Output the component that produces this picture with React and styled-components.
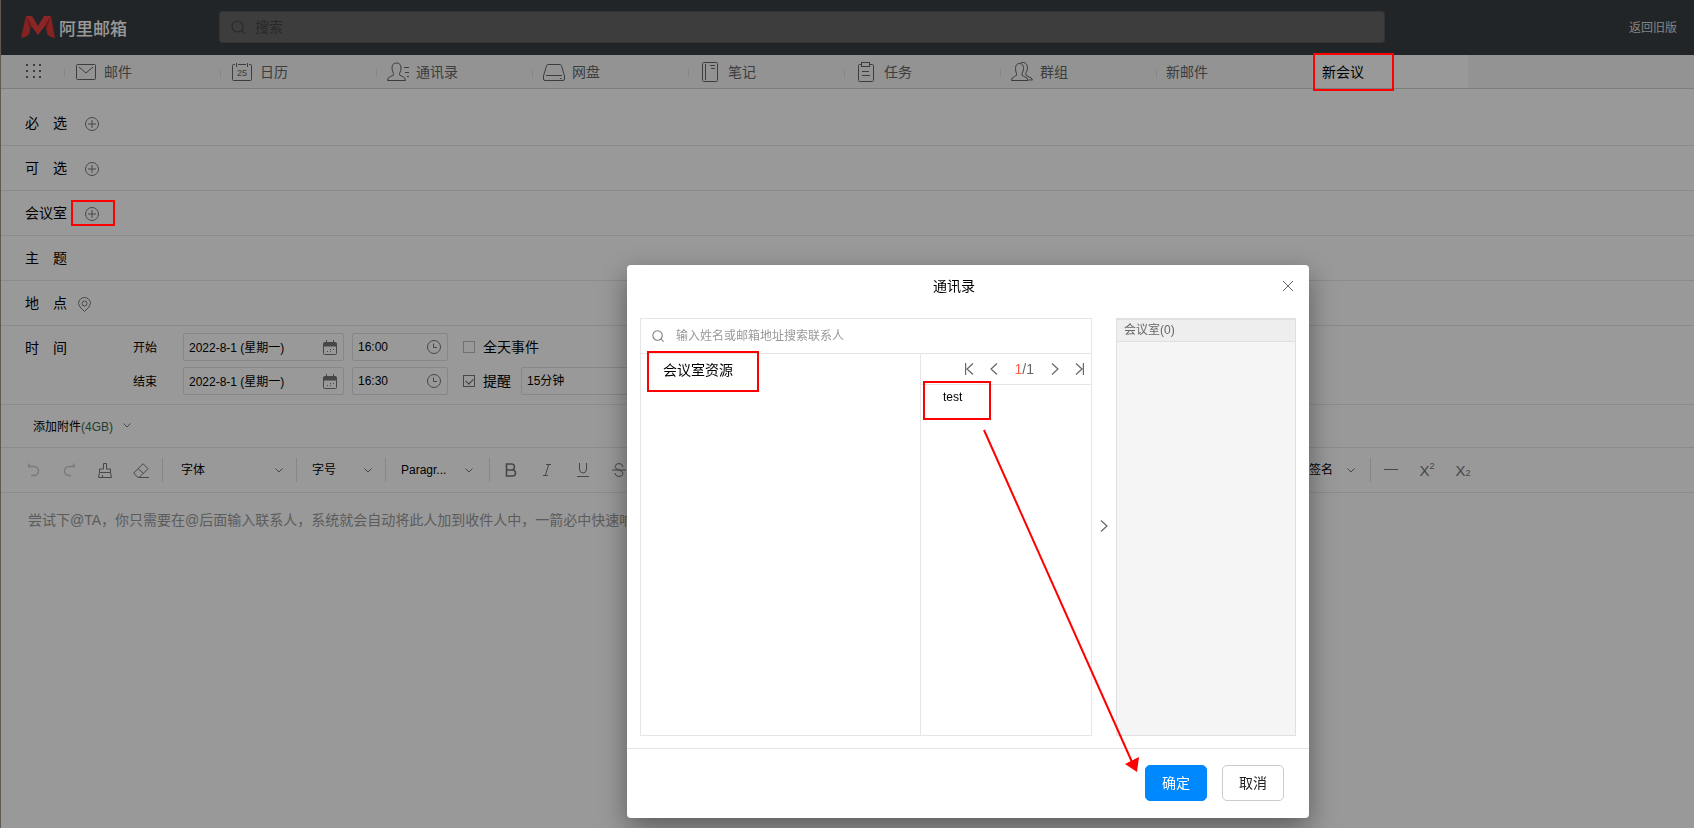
import React, { useState } from 'react';
import styled, { createGlobalStyle } from 'styled-components';

const GlobalStyle = createGlobalStyle`
  * {
    box-sizing: border-box;
  }
  body {
    margin: 0;
    font-family: "Liberation Sans", "Noto Sans CJK SC", sans-serif;
    font-size: 14px;
    color: #000;
  }
  button, input, select, textarea {
    font-family: inherit;
    font-size: inherit;
    color: inherit;
  }
  button {
    padding: 0;
    border: none;
    background: none;
    cursor: pointer;
  }
  svg {
    display: block;
    flex: none;
  }
`;

function Icon({ w, h, sw = 1, children }) {
  return (
    <svg width={w} height={h} viewBox={`0 0 ${w} ${h}`} fill="none" stroke="currentColor" strokeWidth={sw} aria-hidden="true">
      {children}
    </svg>
  );
}

const Logo = () => (
  <svg width="34" height="22" viewBox="0 0 34 22" aria-hidden="true">
    <path d="M5 0h6l6 10 6-10h7l-3 6-10 13L8 7z" fill="#e84040" />
    <path d="M5 0 0 22q7-1 8.500-5L10 8z" fill="#de3a3a" />
    <path d="M30 0l4 22q-7-1-8-5L24.500 8z" fill="#de3a3a" />
    <path d="M5 0l5 8-1.200 5zM30 0l-5.500 8 1 5z" fill="#b52a2e" />
  </svg>
);

const SearchIcon = ({ size = 14 }) => (
  <svg width={size} height={size} viewBox="0 0 14 14" fill="none" stroke="currentColor" strokeWidth="1.200" aria-hidden="true">
    <circle cx="6.500" cy="6.500" r="5.500" />
    <path d="M10.500 10.500l3 3" />
  </svg>
);

const MailIcon = () => (
  <Icon w={22} h={22}>
    <rect x="1.500" y="3.500" width="19" height="15" rx="1" />
    <path d="M4 6l7 6 7-6" />
  </Icon>
);

const CalendarTabIcon = () => (
  <Icon w={22} h={22}>
    <path d="M4 3.500H2.500a1 1 0 0 0-1 1v14a1 1 0 0 0 1 1h17a1 1 0 0 0 1-1v-14a1 1 0 0 0-1-1H18M7 3.500h8M5.500 2v4M16.500 2v4" />
    <text x="11" y="15" fontSize="9" textAnchor="middle" fill="currentColor" stroke="none">25</text>
  </Icon>
);

const ContactIcon = () => (
  <Icon w={22} h={22}>
    <path d="M.500 19.500q0-3 3-4 4-1 3-3Q5 10 5 7q0-5 4.500-5T14 7q0 3-1.500 5.500-1 2 3 3 3 1 3 4z" />
    <path d="M17 6.500h5M18 11.500h4M20 15.500h2" />
  </Icon>
);

const DriveIcon = () => (
  <Icon w={22} h={22}>
    <path d="M5 3.500h12q1 0 1.400 1L21.500 15v3q0 1.500-1.500 1.500H2Q.500 19.500.500 18v-3L3.600 4.500Q4 3.500 5 3.500zM3 14.500h16" />
    <path d="M17 17.500h1.500" />
  </Icon>
);

const NoteIcon = () => (
  <Icon w={22} h={22}>
    <rect x="3.500" y="1.500" width="15" height="19" rx="1" />
    <path d="M6.500 3v16M11 4.500h5M12 7.500h4" />
  </Icon>
);

const TaskIcon = () => (
  <Icon w={22} h={22}>
    <path d="M7 3.500H4.500a1 1 0 0 0-1 1v15a1 1 0 0 0 1 1h13a1 1 0 0 0 1-1v-15a1 1 0 0 0-1-1H15" />
    <rect x="6.500" y="1.500" width="8" height="4" />
    <path d="M7 10.500h7M7 14.500h8" />
  </Icon>
);

const GroupIcon = () => (
  <Icon w={22} h={22}>
    <path d="M.500 19.500q0-3 3-4 3-1 2-3Q4.500 10 4.500 7.500q0-5 4-5t4 5q0 2.500-1.500 5-1 2 2 3 4 1 4 4z" />
    <path d="M9 2.500Q10 1 12.500 1.500q4 .5 4 6 0 2-1.500 4-1.500 3 2 4 4 1 4.500 3.500h-4" />
  </Icon>
);

const PlusIcon = () => (
  <Icon w={14} h={14}>
    <circle cx="7" cy="7" r="6.500" />
    <path d="M3 7h8M7 3v8" />
  </Icon>
);

const PinIcon = () => (
  <Icon w={13} h={15}>
    <path d="M6.500 14.500Q.500 9.500.500 6.500a6 6 0 0 1 12 0q0 3-6 8z" />
    <circle cx="6.500" cy="6.500" r="2.500" />
  </Icon>
);

const CalendarIcon = () => (
  <Icon w={14} h={15}>
    <rect x=".5" y="2.500" width="13" height="12" rx="1" />
    <path d="M1 3h12v3H1z" fill="currentColor" />
    <path d="M3.500 0v3M10.500 0v3" />
    <path d="M7 9.500h1M10 9.500h1M4 11.500h1M7 11.500h1" />
  </Icon>
);

const ClockIcon = () => (
  <Icon w={14} h={14}>
    <circle cx="7" cy="7" r="6.500" />
    <path d="M6.500 3.500v4H10" />
  </Icon>
);

const ChevronDown = () => (
  <Icon w={8} h={5}>
    <path d="M.500.500L4 4 7.500.500" />
  </Icon>
);

const UndoIcon = () => (
  <Icon w={13} h={14} sw={1.500}>
    <path d="M1 3.500h6a4.500 4.500 0 0 1 0 9H4M2 .500v4" />
  </Icon>
);

const RedoIcon = () => (
  <Icon w={13} h={14} sw={1.500}>
    <path d="M12 3.500H6a4.500 4.500 0 0 0 0 9h2M11 .500v4" />
  </Icon>
);

const BrushIcon = () => (
  <Icon w={14} h={15}>
    <path d="M5.500 6V.500h3V6h4v3.500h-11V6zM1.500 9.500L.500 14.500h13l-1-5M4.500 14v-2" />
  </Icon>
);

const EraserIcon = () => (
  <Icon w={16} h={15}>
    <path d="M10 .700l5 5-8.500 8.500H4.500L.700 10zM5 5.500l5.500 5M6 14.500h10" />
  </Icon>
);

const Page = styled.div`
  position: relative;
  display: flex;
  flex-direction: column;
  min-height: 100vh;
  border-left: 1px solid #a09688;
  background: #fff;
`;

const Header = styled.header`
  display: flex;
  align-items: center;
  height: 55px;
  padding-bottom: 1px;
  background: #393e42;
`;

const Brand = styled.a`
  display: flex;
  align-items: center;
  gap: 4px;
  width: 218px;
  padding-left: 20px;
  color: #fff;
  font-size: 17px;
  font-weight: 500;
  text-decoration: none;
`;

const SearchBar = styled.label`
  display: flex;
  flex: 1;
  align-items: center;
  gap: 10px;
  height: 32px;
  padding: 0 11px;
  border: 1px solid #555;
  border-radius: 3px;
  background: #666;
  color: #444;
`;

const BareInput = styled.input`
  flex: 1;
  min-width: 0;
  height: 24px;
  padding: 0 0 1px;
  border: none;
  outline: none;
  background: transparent;

  &::placeholder {
    color: ${(props) => props.$hint || '#999'};
    opacity: 1;
  }
`;

const HeaderSide = styled.div`
  display: flex;
  justify-content: flex-end;
  width: 309px;
  padding-right: 17px;
`;

const OldLink = styled.a`
  padding-bottom: 2px;
  color: #ddd;
  font-size: 12px;
  text-decoration: none;
`;

const TabBar = styled.nav`
  display: flex;
  height: 34px;
  border-bottom: 1px solid #d0d0d0;
  background: #f5f5f5;
`;

const AppsButton = styled.button`
  display: flex;
  align-items: flex-start;
  width: 63px;
  padding: 9px 0 0 25px;
  color: #666;
`;

const Tab = styled.a`
  display: flex;
  align-items: center;
  gap: 7px;
  width: 156px;
  padding: 0 0 2px ${(props) => (props.$plain ? '10px' : '11px')};
  background: ${(props) => (props.$active
    ? '#fff'
    : 'linear-gradient(#ddd, #ddd) 0 14px / 1px 8px no-repeat')};
  color: ${(props) => (props.$active ? '#000' : '#666')};
  text-decoration: none;

  svg {
    margin-top: 3px;
  }
`;

const Form = styled.form`
  padding-top: 12px;
`;

const Row = styled.div`
  display: flex;
  align-items: center;
  height: 45px;
  padding: 2px 0 0 24px;
  border-bottom: 1px solid #e6e6e6;
`;

const RowLabel = styled.label`
  width: 42px;
  padding-bottom: 4px;
`;

const RowButton = styled.button`
  margin: 0 18px;
  color: #777;
`;

const PinButton = styled.button`
  margin: 0 11px;
  color: #777;
`;

const TimeRow = styled.div`
  display: flex;
  padding: 7px 0 9px 24px;
  border-bottom: 1px solid #e6e6e6;
`;

const TimeLabel = styled.span`
  width: 108px;
  padding-top: 4px;
`;

const TimeLines = styled.div`
  display: flex;
  flex-direction: column;
  gap: 6px;
`;

const TimeLine = styled.div`
  display: flex;
  align-items: center;
  height: 28px;
  font-size: 12px;
`;

const LineLabel = styled.label`
  width: 50px;
  padding-bottom: 2px;
`;

const Field = styled.div`
  display: flex;
  align-items: center;
  width: ${(props) => props.$width};
  height: 28px;
  margin-right: 8px;
  padding: 0 6px 0 5px;
  border: 1px solid #e2e2e2;
  border-radius: 2px;
  color: #000;

  svg {
    color: #777;
  }
`;

const CheckLabel = styled.label`
  display: flex;
  align-items: center;
  gap: 8px;
  margin: 0 10px 0 7px;
  font-size: 14px;
`;

const CheckText = styled.span`
  padding-bottom: 2px;
`;

const CheckBox = styled.input`
  appearance: none;
  position: relative;
  width: 12px;
  height: 12px;
  margin: 0;
  border: 1px solid #bbb;

  &:checked {
    border-color: #777;
  }

  &:checked::after {
    content: '';
    position: absolute;
    top: 1px;
    left: 3px;
    width: 4px;
    height: 6px;
    border: solid #666;
    border-width: 0 1px 1px 0;
    transform: rotate(45deg);
  }
`;

const SelectBox = styled.select`
  appearance: none;
  flex: 1;
  min-width: 0;
  padding: 0;
  border: none;
  outline: none;
  background: transparent;
`;

const AttachRow = styled.div`
  display: flex;
  align-items: center;
  height: 43px;
  padding-left: 32px;
  border-bottom: 1px solid #e6e6e6;
`;

const AttachButton = styled.button`
  display: flex;
  align-items: center;
  gap: 10px;
  padding-bottom: 2px;
  font-size: 12px;

  svg {
    color: #777;
  }
`;

const Size = styled.span`
  color: #346a50;
`;

const Toolbar = styled.div`
  display: flex;
  align-items: center;
  justify-content: space-between;
  height: 45px;
  padding: 0 213px 0 14px;
  border-bottom: 1px solid #e6e6e6;
`;

const ToolGroup = styled.div`
  display: flex;
  align-items: center;
`;

const Tool = styled.button`
  display: flex;
  align-items: center;
  justify-content: center;
  width: 36px;
  height: 24px;
  color: #777;

  &:disabled {
    color: #ccc;
  }
  sup, sub {
    font-size: 9px;
    line-height: 1;
  }
  sup {
    margin-bottom: 8px;
  }
  sub {
    margin-top: 6px;
  }
`;

const Letter = styled.span`
  font-size: 15px;
`;

const Divider = styled.span`
  width: 1px;
  height: 24px;
  margin: 0 ${(props) => props.$side || '0px'};
  background: #e0e0e0;
`;

const ToolSelect = styled.label`
  display: flex;
  align-items: center;
  width: ${(props) => props.$width};
  padding: 0 13px 0 15px;
  font-size: 12px;

  svg {
    color: #777;
  }
`;

const Editor = styled.textarea`
  flex: 1;
  padding: 17px 27px;
  border: none;
  outline: none;
  resize: none;
  background: transparent;
  line-height: 20px;

  &::placeholder {
    color: #999;
    opacity: 1;
  }
`;

const Mask = styled.div`
  position: fixed;
  inset: 0;
  background: rgba(0, 0, 0, 0.4);
`;

const Dialog = styled.section`
  position: fixed;
  right: 385px;
  bottom: 10px;
  display: flex;
  flex-direction: column;
  width: 682px;
  border-radius: 4px;
  background: #fff;
  box-shadow: 0 10px 28px rgba(0, 0, 0, 0.4);
`;

const DialogHead = styled.div`
  display: flex;
  align-items: center;
  height: 42px;
  padding-right: 14px;
`;

const DialogTitle = styled.h2`
  flex: 1;
  margin: 0;
  padding-bottom: 2px;
  font-size: 14px;
  font-weight: 400;
  text-align: center;
`;

const CloseButton = styled.button`
  display: flex;
  justify-content: center;
  width: 14px;
  color: #666;
`;

const DialogBody = styled.div`
  display: flex;
  height: 441px;
  padding: 11px 13px 12px;
`;

const Finder = styled.div`
  display: flex;
  flex: 1;
  flex-direction: column;
  border: 1px solid #e6e6e6;
`;

const FinderSearch = styled.label`
  display: flex;
  align-items: center;
  gap: 12px;
  height: 35px;
  padding: 0 11px;
  border-bottom: 1px solid #e6e6e6;
  color: #777;
  font-size: 12px;
`;

const FinderColumns = styled.div`
  display: flex;
  flex: 1;
`;

const Tree = styled.div`
  flex: 1;
  padding: 5px 22px;
  border-right: 1px solid #e6e6e6;
`;

const Entry = styled.button`
  display: block;
  font-size: ${(props) => (props.$small ? '12px' : '14px')};
`;

const People = styled.div`
  width: 170px;
`;

const Pager = styled.div`
  display: flex;
  align-items: center;
  justify-content: flex-end;
  height: 31px;
  padding-right: 7px;
  border-bottom: 1px solid #e6e6e6;
  color: #666;

  button {
    display: flex;
    justify-content: center;
    width: 9px;
    color: #666;
  }
`;

const PageCount = styled.span`
  margin: 0 17px;

  b {
    color: #ff5b4a;
    font-weight: 400;
  }
`;

const PagerPair = styled.div`
  display: flex;
  gap: 15px;
`;

const PeopleList = styled.div`
  padding: 5px 22px;
`;

const MoveButton = styled.button`
  display: flex;
  align-items: center;
  justify-content: center;
  width: 24px;
  padding-bottom: 2px;
  color: #666;
`;

const Picked = styled.div`
  width: 180px;
  border: 1px solid #e0e0e0;
  border-top-width: 2px;
  background: #f5f5f5;
`;

const PickedTitle = styled.h3`
  height: 22px;
  margin: 0;
  padding-left: 7px;
  border-bottom: 1px solid #e0e0e0;
  background: #eee;
  color: #666;
  font-size: 12px;
  font-weight: 400;
  line-height: 21px;
`;

const DialogFoot = styled.div`
  display: flex;
  justify-content: flex-end;
  gap: 15px;
  padding: 16px 25px 17px;
  border-top: 1px solid #e6e6e6;
`;

const DialogButton = styled.button`
  width: 62px;
  height: 36px;
  padding-bottom: 2px;
  border: 1px solid ${(props) => (props.$primary ? '#0089ff' : '#ccc')};
  border-radius: 5px;
  background: ${(props) => (props.$primary ? '#0089ff' : '#fff')};
  color: ${(props) => (props.$primary ? '#fff' : '#222')};
`;

const Marks = styled.svg`
  position: absolute;
  top: 0;
  left: 0;
  pointer-events: none;
`;

const tabs = [
  { name: '邮件', icon: <MailIcon /> },
  { name: '日历', icon: <CalendarTabIcon /> },
  { name: '通讯录', icon: <ContactIcon /> },
  { name: '网盘', icon: <DriveIcon /> },
  { name: '笔记', icon: <NoteIcon /> },
  { name: '任务', icon: <TaskIcon /> },
  { name: '群组', icon: <GroupIcon /> },
  { name: '新邮件' },
  { name: '新会议', active: true },
];

const people = [
  { id: 'required', name: '必　选' },
  { id: 'optional', name: '可　选' },
  { id: 'room', name: '会议室' },
];

function MeetingForm() {
  const [allDay, setAllDay] = useState(false);
  const [remind, setRemind] = useState(true);

  return (
    <Form>
      {people.map(({ id, name }) => (
        <Row key={id}>
          <RowLabel htmlFor={id}>{name}</RowLabel>
          <RowButton type="button"><PlusIcon /></RowButton>
          <BareInput id={id} />
        </Row>
      ))}
      <Row>
        <RowLabel htmlFor="subject">主　题</RowLabel>
        <BareInput id="subject" />
      </Row>
      <Row>
        <RowLabel htmlFor="place">地　点</RowLabel>
        <PinButton type="button"><PinIcon /></PinButton>
        <BareInput id="place" />
      </Row>
      <TimeRow>
        <TimeLabel>时　间</TimeLabel>
        <TimeLines>
          <TimeLine>
            <LineLabel htmlFor="start">开始</LineLabel>
            <Field $width="161px">
              <BareInput id="start" defaultValue="2022-8-1 (星期一)" />
              <CalendarIcon />
            </Field>
            <Field $width="96px">
              <BareInput defaultValue="16:00" />
              <ClockIcon />
            </Field>
            <CheckLabel>
              <CheckBox type="checkbox" checked={allDay} onChange={() => setAllDay(!allDay)} />
              <CheckText>全天事件</CheckText>
            </CheckLabel>
          </TimeLine>
          <TimeLine>
            <LineLabel htmlFor="end">结束</LineLabel>
            <Field $width="161px">
              <BareInput id="end" defaultValue="2022-8-1 (星期一)" />
              <CalendarIcon />
            </Field>
            <Field $width="96px">
              <BareInput defaultValue="16:30" />
              <ClockIcon />
            </Field>
            <CheckLabel>
              <CheckBox type="checkbox" checked={remind} onChange={() => setRemind(!remind)} />
              <CheckText>提醒</CheckText>
            </CheckLabel>
            <Field $width="161px">
              <SelectBox><option>15分钟</option></SelectBox>
              <ChevronDown />
            </Field>
          </TimeLine>
        </TimeLines>
      </TimeRow>
      <AttachRow>
        <AttachButton type="button">
          <span>添加附件<Size>(4GB)</Size></span>
          <ChevronDown />
        </AttachButton>
      </AttachRow>
    </Form>
  );
}

function EditorToolbar() {
  return (
    <Toolbar>
      <ToolGroup>
        <Tool disabled><UndoIcon /></Tool>
        <Tool disabled><RedoIcon /></Tool>
        <Tool><BrushIcon /></Tool>
        <Tool><EraserIcon /></Tool>
        <Divider $side="3px" />
        <ToolSelect $width="130px">
          <SelectBox><option>字体</option></SelectBox>
          <ChevronDown />
        </ToolSelect>
        <Divider />
        <ToolSelect $width="88px">
          <SelectBox><option>字号</option></SelectBox>
          <ChevronDown />
        </ToolSelect>
        <Divider />
        <ToolSelect $width="100px">
          <SelectBox><option>Paragr...</option></SelectBox>
          <ChevronDown />
        </ToolSelect>
        <Divider $side="3px" />
        <Tool>
          <Icon w={14} h={14} sw={1.600}><path d="M2.500 1h5a3 3 0 0 1 0 6h-5zM2.500 7h6a3 3 0 0 1 0 6h-6z" /></Icon>
        </Tool>
        <Tool>
          <Icon w={14} h={14}><path d="M6 1.500h5M3 12.500h5M8.700 1.500l-3.400 11" /></Icon>
        </Tool>
        <Tool>
          <Icon w={14} h={14}><path d="M3.500 0v6q0 4 3.500 4t3.500-4V0M1 13.500h12" /></Icon>
        </Tool>
        <Tool>
          <Icon w={14} h={14}><path d="M11 4Q10.500.500 7 .500T3.200 3.500Q3 6 7 7t4 3.500Q10.500 13.500 7 13.500T2.800 10M0 7h14" /></Icon>
        </Tool>
      </ToolGroup>
      <ToolGroup>
        <ToolSelect $width="74px">
          <SelectBox><option>签名</option></SelectBox>
          <ChevronDown />
        </ToolSelect>
        <Divider $side="2px" />
        <Tool>
          <Icon w={14} h={14}><path d="M0 6.500h14" /></Icon>
        </Tool>
        <Tool><Letter>X</Letter><sup>2</sup></Tool>
        <Tool><Letter>X</Letter><sub>2</sub></Tool>
      </ToolGroup>
    </Toolbar>
  );
}

function ContactDialog() {
  return (
    <Dialog role="dialog" aria-labelledby="dialog-title">
      <DialogHead>
        <DialogTitle id="dialog-title">通讯录</DialogTitle>
        <CloseButton>
          <Icon w={12} h={12}><path d="M1 1l10 10M11 1L1 11" /></Icon>
        </CloseButton>
      </DialogHead>
      <DialogBody>
        <Finder>
          <FinderSearch>
            <SearchIcon size={12} />
            <BareInput placeholder="输入姓名或邮箱地址搜索联系人" />
          </FinderSearch>
          <FinderColumns>
            <Tree>
              <Entry>会议室资源</Entry>
            </Tree>
            <People>
              <Pager>
                <PagerPair>
                  <button><Icon w={9} h={12} sw={1.200}><path d="M.600 0v12M8 .500L2 6l6 5.500" /></Icon></button>
                  <button><Icon w={9} h={12} sw={1.200}><path d="M8 .500L2 6l6 5.500" /></Icon></button>
                </PagerPair>
                <PageCount><b>1</b>/1</PageCount>
                <PagerPair>
                  <button><Icon w={9} h={12} sw={1.200}><path d="M1 .500L7 6l-6 5.500" /></Icon></button>
                  <button><Icon w={9} h={12} sw={1.200}><path d="M8.400 0v12M1 .500L7 6l-6 5.500" /></Icon></button>
                </PagerPair>
              </Pager>
              <PeopleList>
                <Entry $small>test</Entry>
              </PeopleList>
            </People>
          </FinderColumns>
        </Finder>
        <MoveButton>
          <Icon w={8} h={12} sw={1.200}><path d="M1 .500L7 6l-6 5.500" /></Icon>
        </MoveButton>
        <Picked>
          <PickedTitle>会议室(0)</PickedTitle>
        </Picked>
      </DialogBody>
      <DialogFoot>
        <DialogButton $primary>确定</DialogButton>
        <DialogButton>取消</DialogButton>
      </DialogFoot>
    </Dialog>
  );
}

function App() {
  return (
    <>
      <GlobalStyle />
      <Page>
        <Header>
          <Brand href="#"><Logo />阿里邮箱</Brand>
          <SearchBar>
            <SearchIcon />
            <BareInput $hint="#444" placeholder="搜索" />
          </SearchBar>
          <HeaderSide>
            <OldLink href="#">返回旧版</OldLink>
          </HeaderSide>
        </Header>
        <TabBar>
          <AppsButton>
            <svg width="16" height="15" viewBox="0 0 16 15" fill="currentColor" aria-hidden="true">
              {[0, 6, 12].map((y) => [0, 7, 13].map((x) => (
                <rect key={`${x}-${y}`} x={x} y={y} width="2" height="2" />
              )))}
            </svg>
          </AppsButton>
          {tabs.map((tab) => (
            <Tab key={tab.name} href="#" $plain={!tab.icon} $active={tab.active}>
              {tab.icon}
              {tab.name}
            </Tab>
          ))}
        </TabBar>
        <MeetingForm />
        <EditorToolbar />
        <Editor placeholder="尝试下@TA，你只需要在@后面输入联系人，系统就会自动将此人加到收件人中，一箭必中快速响" />
      </Page>
      <Mask />
      <ContactDialog />
      {/* tutorial highlights */}
      <Marks width="1400" height="800" fill="none" stroke="#f00" strokeWidth="2" aria-hidden="true">
        <rect x="1314" y="54" width="79" height="36" />
        <rect x="72" y="201" width="42" height="24" />
        <rect x="648" y="352" width="110" height="39" />
        <rect x="924" y="382" width="66" height="37" />
        <path d="M984 430l148 332" />
        <path d="M1137 772l-12-8 14-7z" fill="#f00" stroke="none" />
      </Marks>
    </>
  );
}

export default App;
